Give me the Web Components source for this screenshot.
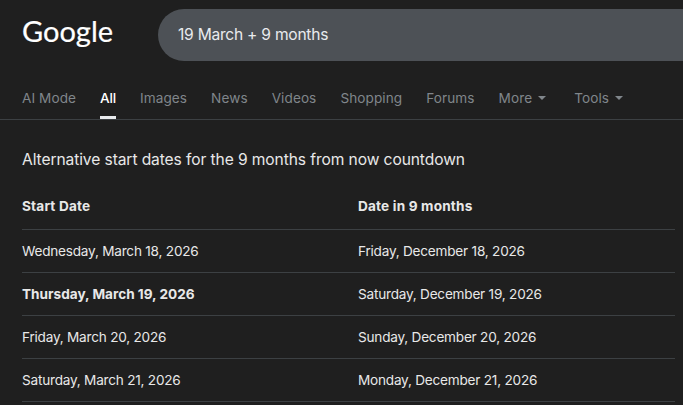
<!DOCTYPE html>
<html>
<head>
<meta charset="utf-8">
<style>
    html, body { margin: 0; height: 100%; background: #1f1f1f; overflow: hidden; }
    body { font-family: Inter, Roboto, "Liberation Sans", sans-serif; color: #e8e8e8; }
</style>
</head>
<body>
<search-header query="19 March + 9 months"></search-header>
<search-tabs></search-tabs>
<date-table heading="Alternative start dates for the 9 months from now countdown">
    <date-row head a="Start Date" b="Date in 9 months"></date-row>
    <date-row a="Wednesday, March 18, 2026" b="Friday, December 18, 2026"></date-row>
    <date-row strong a="Thursday, March 19, 2026" b="Saturday, December 19, 2026"></date-row>
    <date-row a="Friday, March 20, 2026" b="Sunday, December 20, 2026"></date-row>
    <date-row a="Saturday, March 21, 2026" b="Monday, December 21, 2026"></date-row>
</date-table>
<script>
class SearchHeader extends HTMLElement {
    constructor() {
        super();
        this.attachShadow({ mode: "open" });
        this.shadowRoot.innerHTML = `
            <style>
                :host {
                    display: flex;
                    align-items: flex-start;
                    height: 83px;
                    padding: 9px 0 0 22px;
                    box-sizing: border-box;
                }
                .logo {
                    width: 136px;
                    height: 52px;
                    font: 400 29px/44px Lato, sans-serif;
                    -webkit-text-stroke: 0.2px #fff;
                    color: #fff;
                    flex: none;
                }
                .box {
                    flex: 1;
                    height: 52px;
                    display: flex;
                    align-items: center;
                    padding: 0 0 1px 20px;
                    box-sizing: border-box;
                    background: #4d5156;
                    border-radius: 26px 0 0 26px;
                    font-size: 15.6px;
                    letter-spacing: -0.25px;
                    color: #e8eaed;
                }
            </style>
            <div class="logo">Google</div>
            <div class="box"></div>
        `;
        this.shadowRoot.querySelector(".box").textContent = this.getAttribute("query");
    }
}

class SearchTabs extends HTMLElement {
    constructor() {
        super();
        this.attachShadow({ mode: "open" });
        const caret = `<svg width="8" height="4" viewBox="0 0 8 4"><path d="M0 0h8L4 4z" fill="currentColor"/></svg>`;
        this.shadowRoot.innerHTML = `
            <style>
                :host {
                    display: flex;
                    height: 36px;
                    padding-left: 22px;
                    gap: 24px;
                    border-bottom: 1px solid #3c4043;
                    font-size: 13.6px;
                    letter-spacing: 0.08px;
                    color: #80868b;
                }
                .tab {
                    height: 36px;
                    box-sizing: border-box;
                    padding-top: 6px;
                    line-height: 18px;
                    display: flex;
                    align-items: flex-start;
                    gap: 6px;
                }
                .tab svg { margin-top: 7px; }
                .active { color: #fff; font-weight: 500; letter-spacing: -0.2px; border-bottom: 3px solid #e8eaed; }
                .tools { margin-left: 4px; }
            </style>
            <div class="tab">AI Mode</div>
            <div class="tab active">All</div>
            <div class="tab">Images</div>
            <div class="tab">News</div>
            <div class="tab">Videos</div>
            <div class="tab">Shopping</div>
            <div class="tab">Forums</div>
            <div class="tab">More ${caret}</div>
            <div class="tab tools">Tools ${caret}</div>
        `;
    }
}

class DateTable extends HTMLElement {
    constructor() {
        super();
        this.attachShadow({ mode: "open" });
        this.shadowRoot.innerHTML = `
            <style>
                :host {
                    display: block;
                    padding: 29px 8px 0 22px;
                }
                h2 {
                    margin: 0 0 14px;
                    font-size: 15.6px;
                    letter-spacing: -0.1px;
                    font-weight: 400;
                    line-height: 22px;
                    color: #e8e8e8;
                }
            </style>
            <h2></h2>
            <slot></slot>
        `;
        this.shadowRoot.querySelector("h2").textContent = this.getAttribute("heading");
    }
}

class DateRow extends HTMLElement {
    constructor() {
        super();
        this.attachShadow({ mode: "open" });
        this.shadowRoot.innerHTML = `
            <style>
                :host {
                    display: grid;
                    grid-template-columns: 336px 1fr;
                    height: 43px;
                    align-items: center;
                    box-sizing: border-box;
                    border-bottom: 1px solid #3c4043;
                    font-size: 13.6px;
                    letter-spacing: -0.22px;
                    color: #e8e8e8;
                }
                :host([head]) { font-weight: 700; height: 45px; padding-bottom: 2px; letter-spacing: 0.18px; }
                .strong { font-weight: 700; letter-spacing: 0; }
            </style>
            <div class="a"></div>
            <div class="b"></div>
        `;
        const a = this.shadowRoot.querySelector(".a");
        a.textContent = this.getAttribute("a");
        if (this.hasAttribute("strong")) a.classList.add("strong");
        this.shadowRoot.querySelector(".b").textContent = this.getAttribute("b");
    }
}

customElements.define("search-header", SearchHeader);
customElements.define("search-tabs", SearchTabs);
customElements.define("date-table", DateTable);
customElements.define("date-row", DateRow);
</script>
</body>
</html>
